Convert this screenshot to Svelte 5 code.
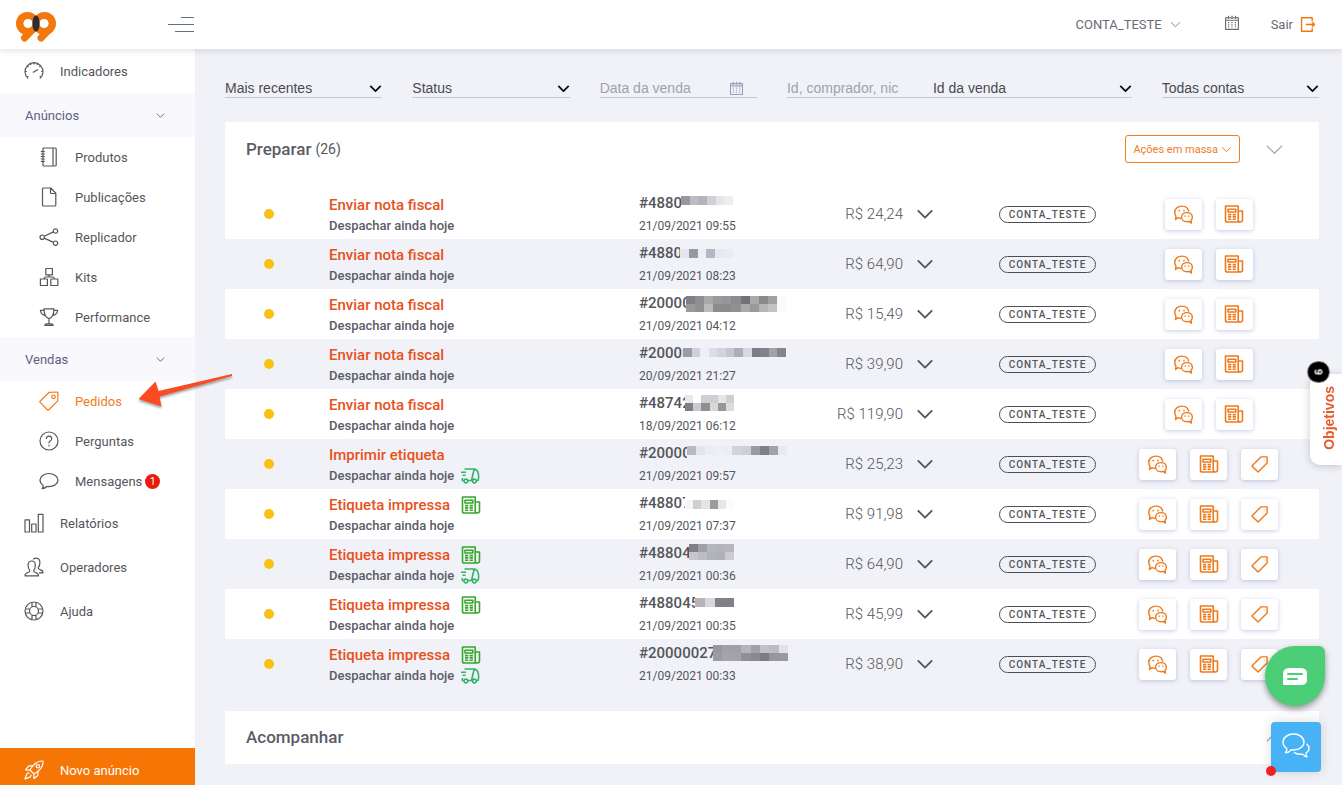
<script lang="ts">
  type Mosaic = { left: number; top: number; width: number; height: number; cells: string[][] };
  type Order = {
    status: string;
    id: string;
    date: string;
    price: string;
    invoice?: boolean;
    truck?: boolean;
    label?: boolean;
    mask: Mosaic;
  };

  const icons: Record<string, string> = {
    gauge: 'M4.2 17.6A9 9 0 1 1 15.8 17.6M9 11.6l5-3M1.2 10.5h1.6M17.2 10.5h1.6M3.6 5l1.1.9M16.4 5l-1.1.9M10 1.8v1.6M6.4 2.6l.6 1.3M13.6 2.6L13 3.9M3 16l1.3-.8M17 16l-1.3-.8',
    notebook: 'M5 1h11.2q1 0 1 1v16q0 1-1 1H5q-1 0-1-1V2q0-1 1-1zM14 1v18M1.8 4.5h4M1.8 7h4M1.8 9.5h4M1.8 12h4M1.8 14.5h4',
    file: 'M4.5 1h7.3l5 5.2V18q0 1-1 1H4.5q-1 0-1-1V2q0-1 1-1zM11.5 1v4.500q0 1 1 1h4.300',
    share: 'M1 10.2a2.2 2.2 0 1 0 4.4 0a2.2 2.2 0 1 0-4.4 0M14.3 4a2.2 2.2 0 1 0 4.4 0a2.2 2.2 0 1 0-4.4 0M14.3 16.2a2.2 2.2 0 1 0 4.4 0a2.2 2.2 0 1 0-4.4 0M5.2 9.3l9.3-4.4M5.2 11.1l9.3 4.3',
    boxes: 'M6.8 1.5h6.6v6.3H6.8zM1.4 12h7v6.5h-7zM11.8 12h7v6.5h-7zM10 7.8v2M4.9 12q0-2 2-2h6.4q2 0 2 2',
    trophy: 'M5 1.8h10q0 8.5-5 9.8Q5 10.300 5 1.800zM5 3.300H1.400q0 4.200 5 5.400M15 3.300h3.600q0 4.200-5 5.400M10 11.600V17M5.800 18.400q0-1.600 2-1.600h4.400q2 0 2 1.600z',
    tag: 'M1 10.200L10.200 1.300L18.200 1q.8 0 .8.8L18.700 9.800L9.600 19q-.5.400-1 0L1 11.200q-.4-.5 0-1zM12.700 5.800a1.800 1.800 0 1 0 3.600 0a1.800 1.800 0 1 0-3.600 0',
    question: 'M1 10a9 9 0 1 0 18 0a9 9 0 1 0-18 0M7.300 8q0-2.800 2.700-2.800T12.700 7.700q0 1.300-1.500 2.200T10 12.300M10 13.800v1.400',
    bubble: 'M10 2.500c5 0 9 2.900 9 6.600s-4 6.600-9 6.600q-1.200 0-2.300-.2Q6 17.500 3 17.600q1.500-1.400 1.200-3.200C2.300 13.200 1 11.400 1 9.100C1 5.400 5 2.500 10 2.500z',
    bars: 'M1 6.800h4.500V19H1zM7.700 11h4.300v8H7.700zM14.300 1.300H19V19h-4.700z',
    users: 'M1 18.800q0-2.600 3-3.300q2-.5 1.800-1.900Q4 11.500 4.100 8q.2-4 3.600-4t3.600 4q.1 3.500-1.600 5.600q-.2 1.400 1.800 1.900q3 .7 3 3.300zM9.300 2.300Q10.200 1.200 12 1.200q3.700 0 3.900 4q.1 3.400-1.700 5.500q-.2 1.400 1.800 1.900q3 .6 3 3.200h-4',
    lifebuoy: 'M1 10a9 9 0 1 0 18 0a9 9 0 1 0-18 0M5.500 10a4.500 4.500 0 1 0 9 0a4.500 4.500 0 1 0-9 0M8 1.300v4.500M12 1.300v4.500M8 14.200v4.500M12 14.200v4.500M1.300 8h4.500M1.300 12h4.500M14.200 8h4.500M14.200 12h4.500',
    rocket: 'M19 1q-6-.3-9.700 4.500L6.500 9q-.6.800 0 1.500l3 3q.7.600 1.500 0l3.500-2.800Q19.300 7 19 1zM9 5.700l-4.500.5L1.500 10l4.500.2M14.300 11l-.5 4.500L10 18.500l-.2-4.500M12.200 6.200a1.700 1.700 0 1 0 3.400 0a1.700 1.700 0 1 0-3.400 0M5.500 13q-2.500-.4-3 1.800L1 18.900l4.200-1.500q2-.6 1.800-2.900',
    calendar: 'M2 3.500h16V18H2zM5.500 1v4M10 1v4M14.500 1v4M2 6.500h16M5 9.500h1.500M9.200 9.500h1.500M13.500 9.500H15M5 12.300h1.500M9.200 12.300h1.500M13.500 12.300H15M5 15h1.500M9.200 15h1.500M13.500 15H15',
    exit: 'M15.500 6V2H3v16h12.500V14M8 10h10M15.300 7l3 3l-3 3',
    wechat: 'M7.400 14.200Q5.500 14 4.300 13.300L1.600 15.300l.5-3.600Q.8 10 .8 7.800C.8 3.900 4 1.200 8.200 1.200c3.800 0 6.800 2.200 7.300 5.700M18.300 19l-.3-3Q19.300 14.700 19.300 12.800C19.300 10 16.900 8 13.700 8s-5.700 2-5.700 4.800s2.500 4.800 5.700 4.800q1.200 0 2.200-.3zM5.500 5v1.800M10.500 5v1.800M11.800 11v1.400M15.600 11v1.400',
    news: 'M16 18H3.300Q1.500 18 1.500 16.200V2h12.700v14q0 2 2.100 2t2.200-2V7h-4.300M4 5.300h7.800V8H4zM4 10.600h3.300M8.600 10.600h3.300M4 12.900h3.300M8.600 12.900h3.300M4 15.200h3.300M8.600 15.200h3.300',
    label: 'M2 11.500L11.500 2H18v6.500L8.500 18zM15 4.900v.6',
    truck: 'M4.500 3h9.700l-2.700 11.500H8M14.200 3q3 .3 3.800 3.500q1.300 4 0 8h-1.700M1 6.300h5M2.500 9.300h3M2.300 12v2.500h1.700M4 15a1.900 1.900 0 1 0 3.800 0a1.900 1.900 0 1 0-3.800 0M12.500 15a1.900 1.900 0 1 0 3.800 0a1.900 1.900 0 1 0-3.800 0',
    down: 'M2 6l8 8l8-8',
    up: 'M2 14l8-8l8 8',
  };

  const groups = [
    { name: 'Anúncios', items: [
      { name: 'Produtos', icon: 'notebook' },
      { name: 'Publicações', icon: 'file' },
      { name: 'Replicador', icon: 'share' },
      { name: 'Kits', icon: 'boxes' },
      { name: 'Performance', icon: 'trophy' },
    ] },
    { name: 'Vendas', items: [
      { name: 'Pedidos', icon: 'tag', active: true },
      { name: 'Perguntas', icon: 'question' },
      { name: 'Mensagens', icon: 'bubble', count: 1 },
    ] },
  ];

  const links = [
    { name: 'Relatórios', icon: 'bars' },
    { name: 'Operadores', icon: 'users' },
    { name: 'Ajuda', icon: 'lifebuoy' },
  ];

  const orders: Order[] = [
    { status: 'Enviar nota fiscal', id: '#4880', date: '21/09/2021 09:55', price: 'R$ 24,24',
      mask: { left: 42, top: 4, width: 52, height: 9, cells: [['#97979f', '#bdbdc3', '#b3b3bb', '#d0d0d5', '#e6e6ea', '#eeeef1']] } },
    { status: 'Enviar nota fiscal', id: '#4880', date: '21/09/2021 08:23', price: 'R$ 64,90',
      mask: { left: 41, top: 7, width: 53, height: 9, cells: [['#e6e7ee', '#9898a0', '#eeeff5', '#b6b7c2', '#e6e7f1', '#eaebf3']] } },
    { status: 'Enviar nota fiscal', id: '#20000', date: '21/09/2021 04:12', price: 'R$ 15,49',
      mask: { left: 47, top: 4, width: 100, height: 16, cells: [
        ['#808084', '#8f8f93', '#a9a9ab', '#9a9a9c', '#96969a', '#8c8c90', '#737377', '#aaaaaa', '#8a8a8e', '#a1a1a5', '#fafafa'],
        ['#999999', '#919195', '#bbbbbb', '#8c8c90', '#8b8b8d', '#909093', '#aaaaaa', '#9a9a9e', '#b5b5b5', '#c2c2c2', '#fafafa'],
      ] } },
    { status: 'Enviar nota fiscal', id: '#20000', date: '20/09/2021 21:27', price: 'R$ 39,90',
      mask: { left: 44, top: 6, width: 103, height: 9, cells: [['#9c9ca4', '#d0d0dc', '#edeef6', '#dcdde6', '#d3d3dd', '#c6c6d0', '#aeaeb8', '#d8d8e0', '#7c7c86', '#82828c', '#a2a2a8', '#85858d']] } },
    { status: 'Enviar nota fiscal', id: '#48742', date: '18/09/2021 06:12', price: 'R$ 119,90',
      mask: { left: 46, top: 3, width: 49, height: 16, cells: [
        ['#e8e8e8', '#ffffff', '#cfcfcf', '#cfcfd1', '#e6e6e6', '#cfcfcf'],
        ['#7f7f85', '#cbcbcd', '#8f8f95', '#d8d8d8', '#97979b', '#dcdcdc'],
      ] } },
    { status: 'Imprimir etiqueta', id: '#20000', date: '21/09/2021 09:57', price: 'R$ 25,23', truck: true, label: true,
      mask: { left: 48, top: 4, width: 100, height: 9, cells: [['#b9b9c3', '#e3e4ec', '#ebecf6', '#edeef6', '#ebecf5', '#d3d3dc', '#cdced7', '#9a9aa2', '#7f7f87', '#a2a2aa', '#e8e9f2']] } },
    { status: 'Etiqueta impressa', id: '#48807', date: '21/09/2021 07:37', price: 'R$ 91,98', invoice: true, label: true,
      mask: { left: 46, top: 8, width: 49, height: 9, cells: [['#f6f6f8', '#cfcfd3', '#e4e4e6', '#9b9b9f', '#e6e6e8', '#fbfbfd']] } },
    { status: 'Etiqueta impressa', id: '#48804', date: '21/09/2021 00:36', price: 'R$ 64,90', invoice: true, truck: true, label: true,
      mask: { left: 50, top: 2, width: 45, height: 16, cells: [
        ['#7f7f85', '#a0a0a6', '#b6b6be', '#b4b4bc', '#b6b6be'],
        ['#c6c6cc', '#bcbcc4', '#b2b2ba', '#b0b0b8', '#cbcbd1'],
      ] } },
    { status: 'Etiqueta impressa', id: '#488045', date: '21/09/2021 00:35', price: 'R$ 45,99', invoice: true, label: true,
      mask: { left: 56, top: 6, width: 39, height: 9, cells: [['#b5b5b9', '#d8d8da', '#808086', '#808088']] } },
    { status: 'Etiqueta impressa', id: '#20000027', date: '21/09/2021 00:33', price: 'R$ 38,90', invoice: true, truck: true, label: true,
      mask: { left: 74, top: 3, width: 75, height: 16, cells: [
        ['#97979d', '#a0a0a6', '#a0a0a6', '#b4b4ba', '#a0a0a6', '#c0c0c6', '#bcbcc2', '#e2e2e6'],
        ['#9c9ca0', '#a4a4aa', '#a4a4a8', '#909096', '#88888e', '#7c7c82', '#97979b', '#9a9a9e'],
      ] } },
  ];
</script>

{#snippet icon(name: string, size = 20, weight = 1.2)}
  <svg class="icon" width={size} height={size} viewBox="0 0 20 20" stroke-width={weight} aria-hidden="true">
    <path d={icons[name]} />
  </svg>
{/snippet}

<header class="topbar">
  <a class="logo" href="#inicio" aria-label="Início">
    <svg width="40" height="32" viewBox="0 0 40 32">
      <circle cx="11.500" cy="12.500" r="11.500" fill="#f4770b" />
      <circle cx="28.500" cy="12.500" r="11.500" fill="#f4770b" />
      <path d="M17 18L8.500 27M33.500 18L25 27" stroke="#f4770b" stroke-width="7" stroke-linecap="round" />
      <circle cx="12" cy="12.500" r="4.600" fill="#fff" />
      <circle cx="28" cy="12.500" r="4.600" fill="#fff" />
      <ellipse cx="20" cy="12.500" rx="3.600" ry="8" fill="#2b2b38" />
    </svg>
  </a>
  <button class="menu-toggle" aria-label="Menu">
    <svg width="26" height="16" viewBox="0 0 26 16"><path d="M13 .5h13M0 7.500h26M7 14.500h19" stroke="#5b7386" stroke-width="1" /></svg>
  </button>
  <div class="topbar-right">
    <button class="account">CONTA_TESTE {@render icon('down', 11, 1.5)}</button>
    <button class="agenda" aria-label="Agenda">{@render icon('calendar', 16, 1.4)}</button>
    <a class="logout" href="#sair">Sair <span class="orange">{@render icon('exit', 17, 1.6)}</span></a>
  </div>
</header>

<div class="layout">
  <nav class="sidebar">
    <a class="nav-link" href="#indicadores">{@render icon('gauge')}Indicadores</a>
    {#each groups as group}
      <button class="nav-group">{group.name}{@render icon('down', 9, 2)}</button>
      {#each group.items as item}
        <a class="nav-link sub" class:active={item.active} href="#{item.icon}">
          {@render icon(item.icon)}
          <span>{item.name}</span>
          {#if item.count}<span class="count">{item.count}</span>{/if}
        </a>
      {/each}
    {/each}
    {#each links as link}
      <a class="nav-link" href="#{link.icon}">{@render icon(link.icon)}{link.name}</a>
    {/each}
    <a class="new-ad" href="#novo">{@render icon('rocket')}Novo anúncio</a>
    <svg class="pointer" width="100" height="42" viewBox="0 0 100 42" aria-hidden="true">
      <path d="M96 5L22.500 22L19.500 12.500L2.500 30L25.500 37.500L23.500 27.500L96 7z" fill="#fc4a22" />
    </svg>
  </nav>

  <main>
    <form class="filters">
      <label class="field">
        <select aria-label="Ordem"><option>Mais recentes</option></select>
        {@render icon('down', 13, 2.8)}
      </label>
      <label class="field">
        <select aria-label="Status"><option>Status</option></select>
        {@render icon('down', 13, 2.8)}
      </label>
      <label class="field date">
        <input type="text" placeholder="Data da venda" aria-label="Data da venda" />
        {@render icon('calendar', 15, 1.4)}
      </label>
      <div class="field search">
        <input type="text" placeholder="Id, comprador, nic" aria-label="Busca" />
        <select aria-label="Campo da busca"><option>Id da venda</option></select>
        {@render icon('down', 13, 2.8)}
      </div>
      <label class="field">
        <select aria-label="Contas"><option>Todas contas</option></select>
        {@render icon('down', 13, 2.8)}
      </label>
    </form>

    <section class="card">
      <div class="card-header">
        <h2>Preparar</h2>
        <span class="total">(26)</span>
        <button class="bulk">Ações em massa {@render icon('down', 11, 1.8)}</button>
        <button class="collapse" aria-label="Recolher">{@render icon('down', 19, 1.3)}</button>
      </div>
      <table>
        <colgroup>
          <col class="col-dot" /><col /><col class="col-id" /><col class="col-price" /><col class="col-account" /><col class="col-actions" />
        </colgroup>
        <tbody>
          {#each orders as order}
            <tr>
              <td class="center"><span class="dot"></span></td>
              <td class="info">
                <div class="status">
                  <strong>{order.status}</strong>
                  {#if order.invoice}<span class="green">{@render icon('news', 20, 1.6)}</span>{/if}
                </div>
                <div class="deadline">
                  <span>Despachar ainda hoje</span>
                  {#if order.truck}<span class="mint">{@render icon('truck', 20, 1.6)}</span>{/if}
                </div>
              </td>
              <td class="info">
                <div class="order-id">
                  {order.id}
                  <div class="cover" style:left="{order.mask.left}px" style:width="{order.mask.width}px" style:padding-top="{order.mask.top}px">
                    <div class="mosaic" style:height="{order.mask.height}px">
                      {#each order.mask.cells as line}
                        <div class="mosaic-line">
                          {#each line as color}<i style:background={color}></i>{/each}
                        </div>
                      {/each}
                    </div>
                  </div>
                </div>
                <div class="order-date">{order.date}</div>
              </td>
              <td>
                <div class="price">
                  {order.price}
                  <button aria-label="Detalhes">{@render icon('down', 18, 2.1)}</button>
                </div>
              </td>
              <td class="account-cell"><span class="badge">CONTA_TESTE</span></td>
              <td>
                <div class="actions">
                  <button aria-label="Mensagens">{@render icon('wechat', 19, 1.5)}</button>
                  <button aria-label="Nota fiscal">{@render icon('news', 20, 1.6)}</button>
                  {#if order.label}<button aria-label="Etiqueta">{@render icon('label', 19, 1.5)}</button>{/if}
                </div>
              </td>
            </tr>
          {/each}
        </tbody>
      </table>
    </section>

    <section class="card">
      <div class="card-header closed">
        <h2>Acompanhar</h2>
        <button class="collapse" aria-label="Expandir">{@render icon('up', 19, 1.3)}</button>
      </div>
    </section>
  </main>
</div>

<button class="goals"><span>Objetivos</span><b>6</b></button>

<button class="help-chat" aria-label="Chat">
  <svg width="24" height="18" viewBox="0 0 24 18">
    <path d="M6 0h12q6 0 6 6v6q0 5-6 5H1q-1 0-1-1V6q0-6 6-6z" fill="#fff" />
    <path d="M5 6h14M5 11h9" stroke="#4ccd78" stroke-width="2" stroke-linecap="round" />
  </svg>
</button>

<button class="support" aria-label="Suporte">
  <svg width="28" height="26" viewBox="0 0 28 26" fill="none" stroke="#fff" stroke-width="1.400" stroke-linejoin="round">
    <path d="M11.500 1C17.300 1 22 4.600 22 9s-4.700 8-10.500 8q-1.300 0-2.500-.2Q7 19.500 3.500 19.800q1.600-2 1.300-4.300C2.500 14 1 11.700 1 9c0-4.400 4.700-8 10.500-8z" />
    <path d="M12 19.300q2.200 2 6.500 2q1 0 2-.2q1.800 2.300 4.500 2.700q-1.200-1.800-1-3.800q3-1.900 3-4.500q0-3-2.500-4.700" />
  </svg>
  <span class="alert-dot"></span>
</button>

<style>
  :global(body) {
    background: #f1f2f7;
    font-family: Roboto, "Liberation Sans", sans-serif;
    font-size: 13px;
    color: #55565c;
  }

  button, select, input {
    font: inherit;
    color: inherit;
    background: none;
    border: 0;
    padding: 0;
    margin: 0;
    outline: none;
  }

  button {
    cursor: pointer;
  }

  a {
    color: inherit;
    text-decoration: none;
  }

  .icon {
    display: block;
    flex: none;
    fill: none;
    stroke: currentColor;
    stroke-linejoin: round;
  }

  .topbar {
    position: sticky;
    top: 0;
    z-index: 5;
    box-sizing: border-box;
    height: 49px;
    display: flex;
    align-items: center;
    padding: 0 26px 0 16px;
    background: #fff;
    box-shadow: 0 1px 8px rgba(40, 40, 60, 0.16);
  }

  .logo {
    display: flex;
    padding-top: 4px;
  }

  .menu-toggle {
    display: flex;
    margin-left: 112px;
  }

  .topbar-right {
    display: flex;
    align-items: center;
    margin-left: auto;
    color: #6a6b74;
  }

  .account, .logout {
    display: flex;
    align-items: center;
    gap: 8px;
  }

  .logout {
    gap: 6px;
  }

  .agenda {
    margin: 0 31px 4px 43px;
  }

  .orange {
    color: #f4770b;
  }

  .layout {
    display: flex;
    min-height: calc(100vh - 49px);
  }

  .sidebar {
    position: sticky;
    top: 49px;
    flex: none;
    width: 195px;
    height: calc(100vh - 49px);
    display: flex;
    flex-direction: column;
    background: #fff;
  }

  .nav-link {
    display: flex;
    align-items: center;
    gap: 16px;
    height: 44px;
    padding-left: 24px;
  }

  .nav-link.sub {
    height: 40px;
    padding-left: 39px;
  }

  .nav-link.active {
    color: #f07d1e;
  }

  .nav-group {
    display: flex;
    align-items: center;
    justify-content: space-between;
    height: 44px;
    padding: 0 30px 0 25px;
    background: #f8f8fd;
    color: #5f6080;
  }

  .count {
    width: 15px;
    margin-left: -13px;
    border-radius: 8px;
    background: #ec1c0c;
    color: #fff;
    font-size: 10px;
    line-height: 15px;
    text-align: center;
  }

  .new-ad {
    display: flex;
    align-items: center;
    gap: 16px;
    margin-top: auto;
    padding: 12px 0 5px 24px;
    background: #f57505;
    color: #fff;
  }

  .pointer {
    position: absolute;
    left: 136px;
    top: 320px;
    filter: drop-shadow(0 2px 1px rgba(0, 0, 0, 0.35));
  }

  main {
    flex: 1;
    min-width: 0;
    padding: 30px 23px 21px 30px;
  }

  .filters {
    display: grid;
    grid-template-columns: repeat(6, minmax(0, 1fr));
    gap: 30px;
    margin-bottom: 24px;
    font-family: "Liberation Sans", Arial, sans-serif;
    font-size: 14px;
    color: #4a4a50;
  }

  .field {
    display: flex;
    align-items: center;
    height: 18px;
    border-bottom: 1px solid #c6c7cf;
  }

  .field .icon {
    margin-left: -13px;
    color: #111;
    pointer-events: none;
  }

  .field select {
    flex: 1;
    min-width: 0;
    appearance: none;
  }

  .field input {
    flex: 1;
    min-width: 0;
  }

  .field input::placeholder {
    color: #a0a1ab;
    opacity: 1;
  }

  .field.date .icon {
    margin-right: 13px;
    color: #9d9ebf;
  }

  .field.search {
    grid-column: span 2;
  }

  .field.search input {
    flex: 0 0 146px;
  }

  .card {
    background: #fff;
    margin-bottom: 22px;
  }

  .card:last-child {
    margin-bottom: 0;
  }

  .card-header {
    display: flex;
    align-items: center;
    padding: 13px 35px 26px 21px;
  }

  .card-header.closed {
    padding: 16px 35px 16px 21px;
  }

  h2 {
    margin: 0;
    font-size: 17px;
    line-height: 21px;
    font-weight: 500;
    color: #5b5c66;
  }

  .total {
    margin-left: 4px;
    font-size: 14px;
  }

  .bulk {
    display: flex;
    align-items: center;
    gap: 3px;
    box-sizing: border-box;
    height: 28px;
    margin-left: auto;
    padding: 0 7px;
    border: 1px solid #f07d1e;
    border-radius: 3px;
    color: #f07d1e;
    font-size: 11px;
  }

  .collapse {
    margin-left: 25px;
    color: #a9aab6;
  }

  .closed .collapse {
    margin-left: auto;
  }

  table {
    width: 100%;
    table-layout: fixed;
    border-collapse: collapse;
  }

  .col-dot { width: 88px; }
  .col-id { width: 160px; }
  .col-price { width: 166px; }
  .col-account { width: 149px; }
  .col-actions { width: 221px; }

  tr {
    height: 50px;
    background: #fff;
  }

  tr:nth-child(even) {
    background: #f1f2f7;
  }

  td {
    padding: 0 16px;
    background: inherit;
  }

  td.info {
    padding-top: 2px;
  }

  .center {
    text-align: center;
  }

  .dot {
    display: inline-block;
    width: 10px;
    height: 10px;
    border-radius: 50%;
    background: #f9c112;
  }

  .status, .deadline {
    display: flex;
    align-items: center;
    height: 21px;
    color: #5b5c66;
    font-weight: 500;
  }

  .status {
    gap: 11px;
  }

  .deadline {
    gap: 6px;
  }

  .status strong {
    font-size: 15px;
    font-weight: 500;
    color: #e8501c;
  }

  .green {
    color: #35a82c;
  }

  .mint {
    color: #2fb469;
  }

  .order-id {
    position: relative;
    background: inherit;
    font-size: 15px;
    line-height: 23px;
    font-weight: 500;
    white-space: nowrap;
  }

  .order-date {
    font-size: 12px;
    line-height: 23px;
  }

  /* hides the end of the order number */
  .cover {
    position: absolute;
    top: 0;
    bottom: 0;
    box-sizing: border-box;
    background: inherit;
  }

  .mosaic {
    display: flex;
    flex-direction: column;
  }

  .mosaic-line {
    flex: 1;
    display: flex;
  }

  .mosaic-line i {
    flex: 1;
  }

  .price {
    display: flex;
    align-items: center;
    justify-content: flex-end;
    gap: 13px;
    margin-right: -1px;
    font-size: 15px;
    font-weight: 300;
    white-space: nowrap;
  }

  .account-cell {
    padding: 0 0 0 50px;
  }

  .badge {
    display: block;
    box-sizing: border-box;
    width: 97px;
    border: 1px solid #4c4d52;
    border-radius: 9px;
    font-size: 10px;
    line-height: 15px;
    font-weight: 500;
    letter-spacing: 1px;
    text-align: center;
  }

  .actions {
    display: flex;
    justify-content: center;
    gap: 14px;
  }

  .actions button {
    display: flex;
    align-items: center;
    justify-content: center;
    width: 37px;
    height: 31px;
    border-radius: 3px;
    background: #fff;
    color: #ee7a1c;
    box-shadow: 0 1px 4px rgba(80, 90, 180, 0.32);
  }

  .goals {
    position: fixed;
    right: 0;
    top: 374px;
    box-sizing: border-box;
    width: 32px;
    height: 91px;
    padding-left: 6px;
    border-radius: 10px 0 0 10px;
    background: #fff;
    box-shadow: 0 1px 8px rgba(0, 0, 0, 0.2);
    color: #e8592a;
    font-family: "Liberation Sans", Arial, sans-serif;
    font-size: 14px;
    font-weight: 700;
  }

  .goals span {
    display: inline-block;
    writing-mode: vertical-rl;
    rotate: 180deg;
  }

  .goals b {
    position: absolute;
    left: -2px;
    top: -13px;
    width: 21px;
    border-radius: 11px;
    background: #000;
    color: #fff;
    font-size: 11px;
    line-height: 22px;
    rotate: -90deg;
  }

  .help-chat {
    position: fixed;
    right: 17px;
    bottom: 79px;
    width: 60px;
    height: 60px;
    padding-top: 5px;
    border-radius: 50% 6px 50% 50%;
    background: #4ccd78;
    box-shadow: 0 3px 6px rgba(0, 0, 0, 0.4);
  }

  .support {
    position: fixed;
    right: 21px;
    bottom: 13px;
    width: 50px;
    height: 50px;
    border-radius: 4px;
    background: #47b2f5;
    box-shadow: 0 0 12px rgba(0, 0, 0, 0.15);
  }

  .alert-dot {
    position: absolute;
    left: -5px;
    bottom: -4px;
    width: 10px;
    height: 10px;
    border-radius: 50%;
    background: #f02020;
  }
</style>
